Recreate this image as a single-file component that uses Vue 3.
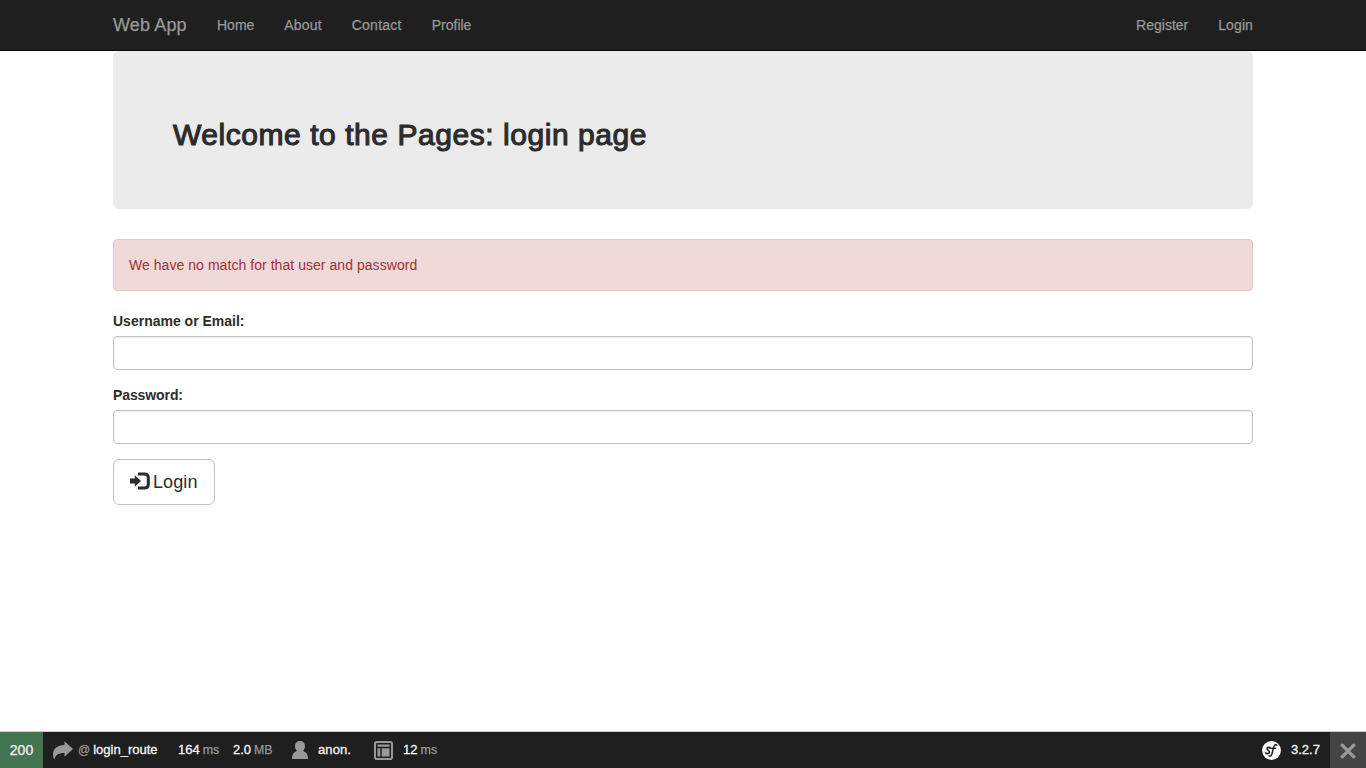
<script setup>
const leftLinks = ['Home', 'About', 'Contact', 'Profile']
const rightLinks = ['Register', 'Login']
const fields = [
  { id: 'username', label: 'Username or Email:', type: 'text' },
  { id: 'password', label: 'Password:', type: 'password' },
]
</script>

<template>
  <div class="page">
    <nav class="navbar">
      <div class="container nav-inner">
        <a class="brand">Web App</a>
        <a v-for="l in leftLinks" :key="l" :class="['link', l.toLowerCase()]">{{ l }}</a>
        <span class="grow"></span>
        <a v-for="l in rightLinks" :key="l" :class="['link', l.toLowerCase()]">{{ l }}</a>
      </div>
    </nav>

    <main class="container">
      <header class="jumbotron"><h2>Welcome to the Pages: login page</h2></header>
      <div class="alert"><span>We have no match for that user and password</span></div>
      <form @submit.prevent>
        <div v-for="f in fields" :key="f.id" class="group">
          <label :for="f.id" :class="f.id">{{ f.label }}</label>
          <input :id="f.id" :type="f.type" />
        </div>
        <button class="btn" type="submit">
          <svg width="20" height="18" viewBox="0 0 20 18">
            <path d="M0 6.500h4.800V3.200L11 9l-6.200 5.800V11.500H0z" fill="#2c2c2c" />
            <path d="M8 2H14.500q3.800 0 3.800 3.800v6.400q0 3.800-3.800 3.800H8" fill="none" stroke="#2c2c2c" stroke-width="3" />
          </svg>
          <span>Login</span>
        </button>
      </form>
    </main>

    <footer class="toolbar">
      <div class="status"><span>200</span></div>
      <div class="block route">
        <svg width="20" height="19" viewBox="0 0 20 19">
          <path d="M20 8 11.500 0.300V4C4 4.300 0 8 0 13.300c0 2.100.5 4 1.500 5.400C2.300 14 5 12 11.500 12v3.800z" fill="#999" />
        </svg>
        <span class="muted at">@</span><span class="val name">login_route</span>
      </div>
      <div class="block time"><span class="val">164</span><span class="muted">ms</span></div>
      <div class="block memory"><span class="val">2.0</span><span class="muted">MB</span></div>
      <div class="block user">
        <svg width="16" height="18" viewBox="0 0 16 18">
          <path d="M8 0c3 0 5 2.100 5 5 0 2-.8 3.800-2 5C14 11 16 13 16 18H0c0-5 2-7 5-8C3.800 8.800 3 7 3 5c0-2.900 2-5 5-5z" fill="#999" />
        </svg>
        <span class="val">anon.</span>
      </div>
      <div class="block twig">
        <svg width="19" height="19" viewBox="0 0 19 19">
          <rect x="1" y="1" width="17" height="17" rx="1.800" fill="none" stroke="#999" stroke-width="2" />
          <path d="M3.500 3.500h12v2.300h-12zM3.500 7.300h2.700v8.200H3.500zM7.700 7.300h7.800v8.200H7.700z" fill="#999" />
        </svg>
        <span class="val">12</span><span class="muted">ms</span>
      </div>
      <span class="grow"></span>
      <div class="block version">
        <svg width="19" height="19" viewBox="0 0 19 19">
          <circle cx="9.500" cy="9.500" r="9.400" fill="#fff" />
          <path d="M8.300 7.200C7.800 5.800 4.900 6.100 5.100 7.900c.2 1.400 2.500 1.700 2.300 3.300-.2 1.800-3 2-3.700.7" fill="none" stroke="#222" stroke-width="1.700" stroke-linecap="round" />
          <path d="M14.800 4.300c-.5-1.200-2.200-.8-2.900.9-.9 2-1.200 5.500-2 7.900-.5 1.600-1.600 2.500-2.700 1.800M9.500 7.300h4.200" fill="none" stroke="#222" stroke-width="1.500" stroke-linecap="round" />
        </svg>
        <span class="val">3.2.7</span>
      </div>
      <div class="close">
        <svg width="16" height="16" viewBox="0 0 16 16">
          <path d="M2.200 2.200l11.600 11.600M13.800 2.200L2.200 13.800" stroke="#999" stroke-width="3.300" stroke-linecap="round" />
        </svg>
      </div>
    </footer>
  </div>
</template>

<style>
body { margin: 0; background: #fff; overflow: hidden; }
</style>

<style scoped>
* { box-sizing: border-box; }
.page {
  height: 768px;
  display: flex;
  flex-direction: column;
  font: 14px/20px "Liberation Sans", Arial, sans-serif;
  color: #2c2c2c;
}
.container { width: 1140px; margin: 0 auto; }
.navbar { height: 51px; flex: none; background: #1f1f1f; border-bottom: 1px solid #080808; }
.nav-inner { display: flex; align-items: center; height: 50px; color: #999; -webkit-text-stroke: 0.25px #999; }
.brand { font-size: 18px; width: 89px; letter-spacing: 0.15px; white-space: nowrap; }
.link { padding: 0 15px; }
.link.about { letter-spacing: 0.15px; }
.link.contact { letter-spacing: 0.25px; }
.link.login { padding-right: 0; letter-spacing: 0.1px; }
.grow { flex: 1; }
main { flex: 1; }
.jumbotron { height: 158px; padding: 67px 60px 0; background: #ebebeb; border-radius: 6px; }
h2 { margin: 0; font-size: 30px; font-weight: 400; line-height: 33px; letter-spacing: 0.55px; white-space: nowrap; -webkit-text-stroke: 1.1px #2c2c2c; }
.alert {
  height: 52px;
  margin: 30px 0 20px;
  padding: 15px;
  color: #a03038;
  background: #efd9d9;
  border: 1px solid #e8c4ca;
  border-radius: 4px;
  letter-spacing: 0.05px;
}
.group { margin-bottom: 15px; }
label { display: block; width: max-content; margin-bottom: 5px; font-weight: 700; }
label.password { letter-spacing: -0.1px; }
input {
  display: block;
  width: 100%;
  height: 34px;
  border: 1px solid #c2c2c2;
  border-radius: 4px;
  background: #fff;
  box-shadow: inset 0 1px 1px rgba(0, 0, 0, 0.075);
  outline: none;
}
.btn {
  display: flex;
  align-items: center;
  gap: 3px;
  width: 102px;
  height: 46px;
  padding: 0 0 0 16px;
  border: 1px solid #c2c2c2;
  border-radius: 6px;
  background: #fff;
  color: #2c2c2c;
  font: 18px/24px "Liberation Sans", Arial, sans-serif;
  letter-spacing: 0.1px;
}
.btn svg { margin-top: -3px; }
.toolbar {
  display: flex;
  flex: none;
  height: 37px;
  border-top: 1px solid #c9cdcb;
  background: #1f1f1f;
  color: #f5f5f5;
  font-size: 13px;
  line-height: 16px;
}
.status { width: 43px; display: flex; align-items: center; justify-content: center; background: #437650; font-size: 14px; -webkit-text-stroke: 0.25px #f5f5f5; }
.block { display: flex; align-items: center; white-space: nowrap; }
.val { -webkit-text-stroke: 0.3px #f5f5f5; }
.muted { color: #999; margin-left: 3px; font-size: 12.5px; -webkit-text-stroke: 0.25px #999; }
.route { width: 135px; padding-left: 10px; }
.route .at { margin: 0 3px 0 5px; font-size: 12px; }
.time { width: 55px; }
.memory { width: 59px; }
.memory .muted { font-size: 12.3px; }
.user { width: 82px; gap: 10px; }
.user .val { letter-spacing: 0.1px; }
.twig .val { margin-left: 10px; }
.version { width: 68px; gap: 10px; }
.close { width: 36px; display: flex; align-items: center; justify-content: center; background: #444; padding-top: 2px; }
</style>
